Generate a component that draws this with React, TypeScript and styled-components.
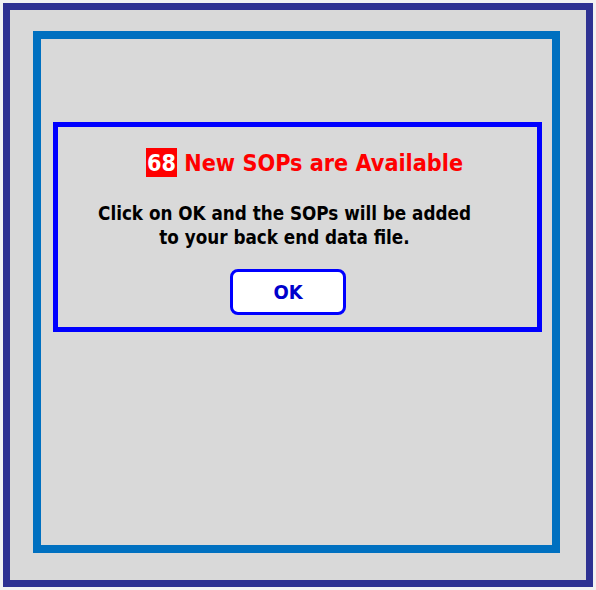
import styled, { createGlobalStyle } from 'styled-components';

const GlobalStyle = createGlobalStyle`
  html, body {
    margin: 0;
    padding: 0;
    background: #f2f2f2;
  }
`;

const App = () => {
  const count = 68;

  return (
    <>
      <GlobalStyle />
      <Page>
        <OuterFrame>
          <InnerFrame>
            <Dialog>
              <Title>
                <Count>{count}</Count> New SOPs are Available
              </Title>
              <Message>
                Click on OK and the SOPs will be added
                <br />
                to your back end data file.
              </Message>
              <OkButton type="button">OK</OkButton>
            </Dialog>
          </InnerFrame>
        </OuterFrame>
      </Page>
    </>
  );
};

const Page = styled.div`
  width: 596px;
  height: 590px;
  box-sizing: border-box;
  padding: 3px;
  font-family: 'DejaVu Sans', Verdana, sans-serif;
  font-stretch: condensed;
`;

const OuterFrame = styled.div`
  box-sizing: border-box;
  width: 590px;
  height: 584px;
  border: 7px solid #2e3192;
  background: #d9d9d9;
  padding: 21px 26px 27px 23px;
`;

const InnerFrame = styled.div`
  box-sizing: border-box;
  height: 100%;
  border: 8px solid #0070c0;
  padding: 83px 10px 0 12px;
`;

const Dialog = styled.div`
  box-sizing: border-box;
  height: 210px;
  border: 5px solid #0000ff;
  display: flex;
  flex-direction: column;
  align-items: center;
`;

const Title = styled.h1`
  margin: 21px 0 0 14px;
  font-size: 23.2px;
  line-height: 29px;
  font-weight: bold;
  color: #ff0000;
  white-space: nowrap;
`;

const Count = styled.span`
  display: inline-block;
  background: #ff0000;
  color: #ffffff;
  padding: 0 1px;
  line-height: 29px;
`;

const Message = styled.p`
  margin: 25px 0 0 -26px;
  font-size: 18.7px;
  line-height: 24px;
  font-weight: bold;
  color: #000000;
  text-align: center;
  white-space: nowrap;
`;

const OkButton = styled.button`
  margin: 19px 0 0 -19px;
  width: 116px;
  height: 46px;
  box-sizing: border-box;
  background: #ffffff;
  border: 3px solid #0000ff;
  border-radius: 8px;
  color: #0000cc;
  font-family: inherit;
  font-stretch: condensed;
  font-size: 20px;
  font-weight: bold;
  cursor: pointer;
`;

export default App;
